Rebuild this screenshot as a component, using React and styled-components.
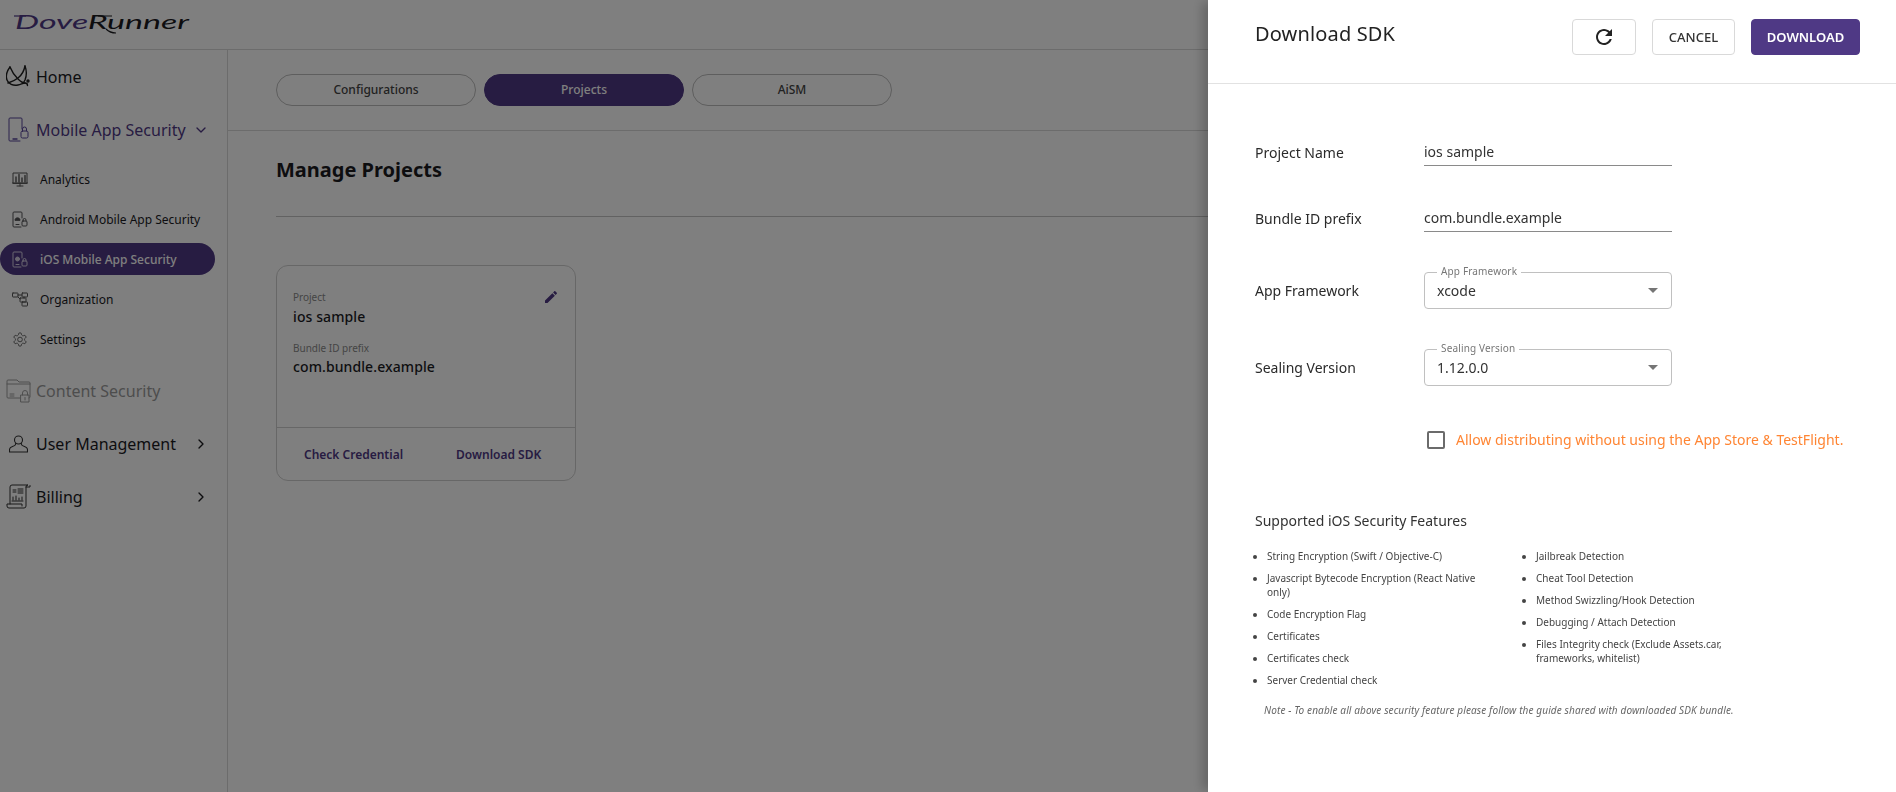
import styled, { createGlobalStyle } from "styled-components";
import { ChevronDown, ChevronRight } from "lucide-react";

const GlobalStyle = createGlobalStyle`
  html, body {
    margin: 0;
    padding: 0;
    background: #fff;
    font-family: "Noto Sans", "Open Sans", sans-serif;
    color: #1b1b1f;
  }
  * { box-sizing: border-box; }
`

const Page = styled.div`
  width: 1896px;
  height: 792px;
  overflow: hidden;
  display: flex;
  flex-direction: column;
`

const Header = styled.header`
  height: 50px;
  flex: none;
  padding: 9px 0 0 14px;
  border-bottom: 1px solid #d8d8d8;
`

const Body = styled.div`
  flex: 1;
  display: flex;
`

const Sidebar = styled.nav`
  width: 228px;
  flex: none;
  border-right: 1px solid #d8d8d8;
`

const MainRow = styled.div`
  height: 53px;
  display: flex;
  align-items: center;
  padding-right: 18px;
  font-size: 16px;
  color: ${(p) => (p.$disabled ? "#9b9b9b" : p.$open ? "#4f3985" : "#1b1b1f")};
`

const MainIcon = styled.span`
  width: 36px;
  flex: none;
  display: flex;
  justify-content: center;
  padding: 0 3px;
`

const Chevron = styled.span`
  margin-left: auto;
  display: flex;
  color: ${(p) => (p.$open ? "#4f3985" : "#1b1b1f")};
`

const SubList = styled.div`
  margin: 3px 0 5px;
  display: flex;
  flex-direction: column;
`

const SubRow = styled.div`
  width: 215px;
  height: 40px;
  display: flex;
  align-items: center;
  gap: 12px;
  padding-left: 12px;
  font-size: 12px;
  color: ${(p) => (p.$active ? "#fff" : "#1b1b1f")};
  ${(p) => p.$active && `
    height: 32px;
    margin: 4px 0;
    background: #4f3985;
    border-radius: 16px;
    font-weight: 500;
  `}
`

const Main = styled.main`
  flex: 1;
`

const TabBar = styled.div`
  height: 81px;
  display: flex;
  gap: 8px;
  padding: 24px 0 0 48px;
  border-bottom: 1px solid #d8d8d8;
`

const Tab = styled.div`
  width: 200px;
  height: 32px;
  padding-bottom: 2px;
  border-radius: 16px;
  display: flex;
  align-items: center;
  justify-content: center;
  font-size: 12px;
  font-weight: 500;
  color: ${(p) => (p.$active ? "#fff" : "#444")};
  background: ${(p) => (p.$active ? "#4f3985" : "transparent")};
  border: 1px solid ${(p) => (p.$active ? "#4f3985" : "#bcbcbc")};
`

const Content = styled.div`
  padding-left: 48px;
`

const PageTitle = styled.h1`
  margin: 0;
  height: 86px;
  padding-top: 25px;
  font-size: 20px;
  line-height: 28px;
  font-weight: 700;
  border-bottom: 1px solid #c4c4c4;
`

const Card = styled.div`
  width: 300px;
  height: 216px;
  margin-top: 48px;
  border: 1px solid #cfcfcf;
  border-radius: 12px;
  display: flex;
  flex-direction: column;
`

const CardBody = styled.div`
  flex: 1;
  position: relative;
  padding: 24px 16px 0;
`

const EditIcon = styled.svg`
  position: absolute;
  top: 23px;
  right: 16px;
  width: 16px;
  height: 16px;
  fill: #4f3985;
`

const FieldLabel = styled.div`
  font-size: 10px;
  line-height: 14px;
  color: #8a8a8a;
  margin-top: ${(p) => p.$gap || 0}px;
`

const FieldValue = styled.div`
  font-size: 14px;
  line-height: 20px;
  font-weight: 500;
  letter-spacing: 0.1px;
  margin-top: ${(p) => p.$gap ?? 3}px;
`

const CardFooter = styled.div`
  height: 53px;
  flex: none;
  border-top: 1px solid #cfcfcf;
  display: flex;
  align-items: center;
  padding-left: 27px;
  gap: 53px;
  font-size: 12px;
  font-weight: 600;
  color: #4f3985;
`

const Overlay = styled.div`
  position: fixed;
  inset: 0;
  background: rgba(0, 0, 0, 0.5);
`

const Drawer = styled.aside`
  position: fixed;
  top: 0;
  right: 0;
  bottom: 0;
  width: 688px;
  background: #fff;
  box-shadow: -8px 0 10px -2px rgba(0, 0, 0, 0.2);
`

const DrawerHeader = styled.div`
  height: 84px;
  border-bottom: 1px solid #e2e2e2;
  display: flex;
  align-items: flex-start;
  padding: 19px 36px 0 47px;
`

const DrawerTitle = styled.h2`
  margin: 0 auto 0 0;
  font-size: 20px;
  line-height: 30px;
  font-weight: 400;
  letter-spacing: 0.15px;
  color: #222;
`

const HeaderButton = styled.button`
  height: 36px;
  width: ${(p) => p.$width}px;
  margin-left: ${(p) => p.$gap || 0}px;
  padding: 0;
  border-radius: 4px;
  display: flex;
  align-items: center;
  justify-content: center;
  font-family: inherit;
  font-size: 13px;
  font-weight: ${(p) => (p.$primary ? 600 : 500)};
  color: ${(p) => (p.$primary ? "#fff" : "#333")};
  background: ${(p) => (p.$primary ? "#4f3985" : "#fff")};
  border: 1px solid ${(p) => (p.$primary ? "#4f3985" : "#d9d9d9")};
`

const Form = styled.div`
  padding: 54px 48px 0 47px;
`

const FormRow = styled.div`
  display: flex;
  align-items: center;
  margin-top: ${(p) => p.$gap || 0}px;
`

const FormLabel = styled.div`
  width: 169px;
  font-size: 14px;
  color: #2a2a2a;
`

const TextField = styled.div`
  width: 248px;
  height: 28px;
  line-height: 27px;
  font-size: 14px;
  color: #333;
  border-bottom: 1px solid #8a8a8a;
`

const SelectBox = styled.div`
  position: relative;
  width: 248px;
  height: 37px;
  padding: 0 12px;
  display: flex;
  align-items: center;
  justify-content: space-between;
  border: 1px solid #c0c0c0;
  border-radius: 4px;
  font-size: 14px;
  color: #333;
`

const SelectLegend = styled.span`
  position: absolute;
  top: -8px;
  left: 12px;
  padding: 0 4px;
  background: #fff;
  font-size: 10px;
  line-height: 12px;
  letter-spacing: 0.15px;
  color: #777;
`

const SelectArrow = styled.span`
  width: 0;
  height: 0;
  margin-right: 1px;
  border-left: 5px solid transparent;
  border-right: 5px solid transparent;
  border-top: 5px solid #757575;
`

const CheckRow = styled.div`
  display: flex;
  align-items: center;
  gap: 11px;
  margin: 44px 0 0 172px;
  font-size: 14px;
  white-space: nowrap;
  color: #ff8533;
`

const CheckBox = styled.span`
  width: 18px;
  height: 18px;
  flex: none;
  border: 2px solid #6b6b6b;
  border-radius: 2px;
`

const SectionTitle = styled.h3`
  margin: 62px 0 0;
  font-size: 14px;
  line-height: 20px;
  font-weight: 400;
  color: #333;
`

const FeatureColumns = styled.div`
  display: flex;
  margin-top: 18px;
`

const FeatureList = styled.ul`
  width: 269px;
  margin: 0;
  padding: 0 45px 0 12px;
  flex: none;
`

const FeatureItem = styled.li`
  font-size: 10px;
  line-height: 14px;
  margin-bottom: 8px;
  color: #444;
`

const Note = styled.p`
  margin: 8px 0 0 9px;
  font-size: 10px;
  line-height: 14px;
  font-style: italic;
  letter-spacing: 0.12px;
  color: #666;
`

const LogoSvg = styled.svg`
  display: block;
  overflow: visible;
`

const LogoText = styled.text`
  font-family: "Lato", sans-serif;
  font-size: 19px;
  font-style: italic;
  font-weight: 400;
`

const navStroke = { fill: "none", stroke: "currentColor", strokeWidth: 1, strokeLinecap: "round", strokeLinejoin: "round" }

const Logo = () => (
  <LogoSvg width="176" height="30" viewBox="0 0 176 30">
    <LogoText x="1" y="20" textLength="174" lengthAdjust="spacingAndGlyphs" fill="#4f3985">
      Dove<tspan fill="#1b1b1f">Runner</tspan>
    </LogoText>
    <path d="M0 7h12" stroke="#4f3985" strokeWidth="1.2" fill="none" />
    <path d="M84 7h14M92 20c3 3 6 4 10 4" stroke="#1b1b1f" strokeWidth="1.2" fill="none" />
  </LogoSvg>
)

const HomeIcon = () => (
  <svg width="24" height="23" viewBox="0 0 24 23" {...navStroke} stroke="#1f1f1f" strokeWidth="1.4">
    <path d="M4 2C1 6-.5 11 1 15c1.500 4 6 6 11 5 3-.6 5-2 7-2 1.500 0 2.500 1 2.500 2.500" />
    <path d="M4 2c2 5 5 9 8 12 2 2 4 4 7 4" />
    <path d="M19 1c-1 5-3 9-7 12-3 2.500-7 4-10 5" />
    <path d="M19 1c1.500 4 2 9 0 14-.5 1-1 2-2 3" />
    <circle cx="22" cy="16" r="1" />
  </svg>
)

const PhoneLockIcon = () => (
  <svg width="21" height="25" viewBox="0 0 21 25" {...navStroke} stroke="#57459a">
    <path d="M12 24H2a1 1 0 0 1-1-1V2a1 1 0 0 1 1-1h11a1 1 0 0 1 1 1v10" />
    <path d="M5 22h4" strokeWidth="1.4" />
    <rect x="13" y="14" width="7" height="7" rx="1.500" />
    <path d="M14.500 14v-2a2 2 0 0 1 4 0v2" />
  </svg>
)

const AnalyticsIcon = () => (
  <svg width="16" height="15" viewBox="0 0 16 15" {...navStroke} stroke="#555">
    <path d="M1 11V1h14v10zM0.500 11h15M5 14h6M8 11v3" />
    <path d="M4 10V5M7 10V2.500M10 10V6M13 10V3.500" strokeWidth="1.400" />
  </svg>
)

const DeviceLockIcon = ({ $apple }) => (
  <svg width="16" height="17" viewBox="0 0 16 17" {...navStroke} opacity="0.75">
    <path d="M9 16H2a1 1 0 0 1-1-1V2a1 1 0 0 1 1-1h7a1 1 0 0 1 1 1v5" />
    {$apple
      ? <circle cx="5.500" cy="8" r="2" fill="currentColor" />
      : <path d="M3 9c0-3 5-3 5 0z" fill="currentColor" />}
    <path d="M4 13.500h3" />
    <rect x="10" y="10" width="5" height="5" rx="1" />
    <path d="M11 10V9a1.500 1.500 0 0 1 3 0v1" />
  </svg>
)

const OrgIcon = () => (
  <svg width="16" height="15" viewBox="0 0 16 15" {...navStroke} stroke="#555">
    <rect x="0.500" y="1" width="5.500" height="4" rx="0.500" />
    <rect x="10" y="1" width="5.500" height="4" rx="0.500" />
    <rect x="8" y="6" width="6" height="4" rx="0.500" />
    <rect x="10" y="10" width="5.500" height="4" rx="0.500" />
    <path d="M6 3h4M6 5l2 2M12 5v1" />
  </svg>
)

const GearIcon = () => (
  <svg width="16" height="17" viewBox="0 0 24 24" fill="none" stroke="#555" strokeWidth="1.300">
    <circle cx="12" cy="12" r="3.500" />
    <path d="M12.200 2h-.4a2 2 0 0 0-2 2v.2a2 2 0 0 1-1 1.700l-.4.3a2 2 0 0 1-2 0l-.2-.1a2 2 0 0 0-2.700.7l-.2.4a2 2 0 0 0 .7 2.700l.2.1a2 2 0 0 1 1 1.700v.6a2 2 0 0 1-1 1.700l-.2.1a2 2 0 0 0-.7 2.700l.2.4a2 2 0 0 0 2.700.7l.2-.1a2 2 0 0 1 2 0l.4.3a2 2 0 0 1 1 1.700v.2a2 2 0 0 0 2 2h.4a2 2 0 0 0 2-2v-.2a2 2 0 0 1 1-1.700l.4-.3a2 2 0 0 1 2 0l.2.1a2 2 0 0 0 2.700-.7l.2-.4a2 2 0 0 0-.7-2.700l-.2-.1a2 2 0 0 1-1-1.700v-.6a2 2 0 0 1 1-1.700l.2-.1a2 2 0 0 0 .7-2.700l-.2-.4a2 2 0 0 0-2.700-.7l-.2.1a2 2 0 0 1-2 0l-.4-.3a2 2 0 0 1-1-1.700V4a2 2 0 0 0-2-2z" />
  </svg>
)

const FolderLockIcon = () => (
  <svg width="25" height="24" viewBox="0 0 25 24" {...navStroke} stroke="#9c9c9c">
    <path d="M14 19H2a1 1 0 0 1-1-1V2a1 1 0 0 1 1-1h9l2 2h10a1 1 0 0 1 1 1v14a1 1 0 0 1-1 1" />
    <path d="M1 5h23M4 15h4M4 17h4" />
    <rect x="15" y="16" width="8" height="7" />
    <path d="M16.500 16v-2a2.500 2.500 0 0 1 5 0v2M19 18.500v2.500" />
  </svg>
)

const UserIcon = () => (
  <svg width="19" height="18" viewBox="0 0 19 18" {...navStroke} stroke="#333" strokeWidth="1.100">
    <circle cx="9.500" cy="5" r="4" />
    <path d="M6.500 8.500v1c0 1-1.500 1.500-3 2-1.500.5-3 1.500-3 3v2.500h18v-2.500c0-1.500-1.500-2.500-3-3-1.500-.5-3-1-3-2v-1" />
  </svg>
)

const BillingIcon = () => (
  <svg width="25" height="25" viewBox="0 0 25 25" {...navStroke} stroke="#333">
    <path d="M4 20V3a2 2 0 0 1 2-2h16a2 2 0 0 0-2 2v19a2 2 0 0 1-2 2H3a2 2 0 0 1-2-2v-2h15v2" />
    <path d="M20 3h4V1.500" />
    <path d="M7 6h3M7 8h3M12 5h5M12 7h5M12 9h5M7 16v-3M10 16v-4M13 16v-2M16 16v-3M6 17h11" />
  </svg>
)

const RefreshIcon = () => (
  <svg width="24" height="24" viewBox="0 0 24 24" fill="#222">
    <path d="M17.650 6.350C16.200 4.900 14.210 4 12 4c-4.420 0-7.990 3.580-7.990 8s3.570 8 7.990 8c3.730 0 6.840-2.550 7.730-6h-2.080c-.82 2.330-3.040 4-5.650 4-3.310 0-6-2.690-6-6s2.690-6 6-6c1.660 0 3.140.69 4.220 1.780L13 11h7V4l-2.350 2.350z" />
  </svg>
)

const leftFeatures = [
  "String Encryption (Swift / Objective-C)",
  "Javascript Bytecode Encryption (React Native only)",
  "Code Encryption Flag",
  "Certificates",
  "Certificates check",
  "Server Credential check",
]

const rightFeatures = [
  "Jailbreak Detection",
  "Cheat Tool Detection",
  "Method Swizzling/Hook Detection",
  "Debugging / Attach Detection",
  "Files Integrity check (Exclude Assets.car, frameworks, whitelist)",
]

function App() {
  return (
    <>
      <GlobalStyle />
      <Page>
        <Header><Logo /></Header>
        <Body>
          <Sidebar>
            <MainRow><MainIcon><HomeIcon /></MainIcon>Home</MainRow>
            <MainRow $open>
              <MainIcon><PhoneLockIcon /></MainIcon>Mobile App Security
              <Chevron $open><ChevronDown size={16} strokeWidth={2} /></Chevron>
            </MainRow>
            <SubList>
              <SubRow><AnalyticsIcon />Analytics</SubRow>
              <SubRow><DeviceLockIcon />Android Mobile App Security</SubRow>
              <SubRow $active><DeviceLockIcon $apple />iOS Mobile App Security</SubRow>
              <SubRow><OrgIcon />Organization</SubRow>
              <SubRow><GearIcon />Settings</SubRow>
            </SubList>
            <MainRow $disabled><MainIcon><FolderLockIcon /></MainIcon>Content Security</MainRow>
            <MainRow>
              <MainIcon><UserIcon /></MainIcon>User Management
              <Chevron><ChevronRight size={16} strokeWidth={2} /></Chevron>
            </MainRow>
            <MainRow>
              <MainIcon><BillingIcon /></MainIcon>Billing
              <Chevron><ChevronRight size={16} strokeWidth={2} /></Chevron>
            </MainRow>
          </Sidebar>
          <Main>
            <TabBar>
              <Tab>Configurations</Tab>
              <Tab $active>Projects</Tab>
              <Tab>AiSM</Tab>
            </TabBar>
            <Content>
              <PageTitle>Manage Projects</PageTitle>
              <Card>
                <CardBody>
                  <EditIcon viewBox="0 0 24 24">
                    <path d="M3 17.250V21h3.750L17.810 9.940l-3.750-3.750L3 17.250zM20.710 7.040c.39-.39.39-1.020 0-1.410l-2.340-2.340c-.39-.39-1.020-.39-1.410 0l-1.830 1.830 3.750 3.750 1.830-1.830z" />
                  </EditIcon>
                  <FieldLabel>Project</FieldLabel>
                  <FieldValue>ios sample</FieldValue>
                  <FieldLabel $gap={14}>Bundle ID prefix</FieldLabel>
                  <FieldValue $gap={2}>com.bundle.example</FieldValue>
                </CardBody>
                <CardFooter>
                  <span>Check Credential</span>
                  <span>Download SDK</span>
                </CardFooter>
              </Card>
            </Content>
          </Main>
        </Body>
      </Page>
      <Overlay />
      <Drawer>
        <DrawerHeader>
          <DrawerTitle>Download SDK</DrawerTitle>
          <HeaderButton $width={64}><RefreshIcon /></HeaderButton>
          <HeaderButton $width={83} $gap={16}>CANCEL</HeaderButton>
          <HeaderButton $width={109} $gap={16} $primary>DOWNLOAD</HeaderButton>
        </DrawerHeader>
        <Form>
          <FormRow>
            <FormLabel>Project Name</FormLabel>
            <TextField>ios sample</TextField>
          </FormRow>
          <FormRow $gap={38}>
            <FormLabel>Bundle ID prefix</FormLabel>
            <TextField>com.bundle.example</TextField>
          </FormRow>
          <FormRow $gap={40}>
            <FormLabel>App Framework</FormLabel>
            <SelectBox>
              <SelectLegend>App Framework</SelectLegend>
              xcode
              <SelectArrow />
            </SelectBox>
          </FormRow>
          <FormRow $gap={40}>
            <FormLabel>Sealing Version</FormLabel>
            <SelectBox>
              <SelectLegend>Sealing Version</SelectLegend>
              1.12.0.0
              <SelectArrow />
            </SelectBox>
          </FormRow>
          <CheckRow>
            <CheckBox />
            Allow distributing without using the App Store &amp; TestFlight.
          </CheckRow>
          <SectionTitle>Supported iOS Security Features</SectionTitle>
          <FeatureColumns>
            <FeatureList>
              {leftFeatures.map((f) => <FeatureItem key={f}>{f}</FeatureItem>)}
            </FeatureList>
            <FeatureList>
              {rightFeatures.map((f) => <FeatureItem key={f}>{f}</FeatureItem>)}
            </FeatureList>
          </FeatureColumns>
          <Note>Note - To enable all above security feature please follow the guide shared with downloaded SDK bundle.</Note>
        </Form>
      </Drawer>
    </>
  );
}

export default App;
